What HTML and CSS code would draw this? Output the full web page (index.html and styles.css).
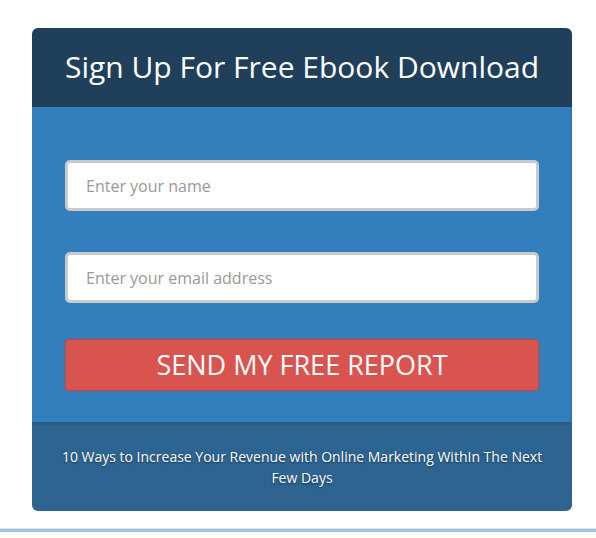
FILE: index.html
```html
<!DOCTYPE html>
<html>
<head>
<meta charset="utf-8">
<link rel="stylesheet" href="styles.css">
</head>
<body>
<div class="page">
  <div class="box">
    <div class="box-head">
      <h1 class="title">Sign Up For Free Ebook Download</h1>
    </div>
    <form class="box-body">
      <input class="field" type="text" placeholder="Enter your name">
      <input class="field field-email" type="text" placeholder="Enter your email address">
      <button class="send" type="button">SEND MY FREE REPORT</button>
    </form>
    <div class="box-foot">
      <p class="foot-text">10 Ways to Increase Your Revenue with Online Marketing WithIn The Next Few Days</p>
    </div>
  </div>
  <div class="rule"></div>
</div>
</body>
</html>
```
FILE: styles.css
```css
html, body {
  margin: 0;
  padding: 0;
  background: #ffffff;
  font-family: "Open Sans", "Liberation Sans", sans-serif;
}
.page {
  width: 596px;
  padding-top: 28px;
}
.box {
  width: 540px;
  margin-left: 32px;
  border-radius: 6px;
  overflow: hidden;
}
.box-head {
  height: 79px;
  background: #203f5a;
  display: flex;
  align-items: center;
  justify-content: center;
}
.title {
  margin: 0;
  color: #ffffff;
  font-weight: 400;
  font-size: 30px;
  line-height: 40px;
  padding-bottom: 2px;
}
.box-body {
  margin: 0;
  background: #337fbd;
  padding: 53px 33px 31px 33px;
  box-shadow: inset -2px 0 0 #3176b0;
  display: flex;
  flex-direction: column;
}
.field {
  box-sizing: border-box;
  height: 51px;
  width: 100%;
  margin: 0 0 41px 0;
  border: 3px solid #cacaca;
  border-radius: 5px;
  background: #ffffff;
  padding: 0 18px;
  font-family: "Open Sans", "Liberation Sans", sans-serif;
  font-size: 16px;
  color: #555;
  outline: none;
}
.field::placeholder {
  color: #999999;
}
.field-email {
  margin-bottom: 36px;
}
.send {
  box-sizing: border-box;
  height: 52px;
  width: 100%;
  background: #d9534f;
  border: 1px solid #d43f3a;
  border-radius: 4px;
  color: #ffffff;
  font-family: "Open Sans", "Liberation Sans", sans-serif;
  font-size: 27px;
  font-weight: 400;
  padding: 0;
  line-height: 48px;
}
.box-foot {
  background: #2e6491;
  border-top: 3px solid #2b5c86;
  padding: 21px 20px 23px;
}
.foot-text {
  margin: 0;
  text-align: center;
  color: #ffffff;
  font-size: 14px;
  font-weight: 400;
  line-height: 21px;
  text-shadow: 0 1px 2px rgba(0, 0, 0, 0.5);
}
.rule {
  margin-top: 17px;
  height: 3px;
  border-top: 1px solid #dbe4ec;
  background: #9dc2e2;
}
```
